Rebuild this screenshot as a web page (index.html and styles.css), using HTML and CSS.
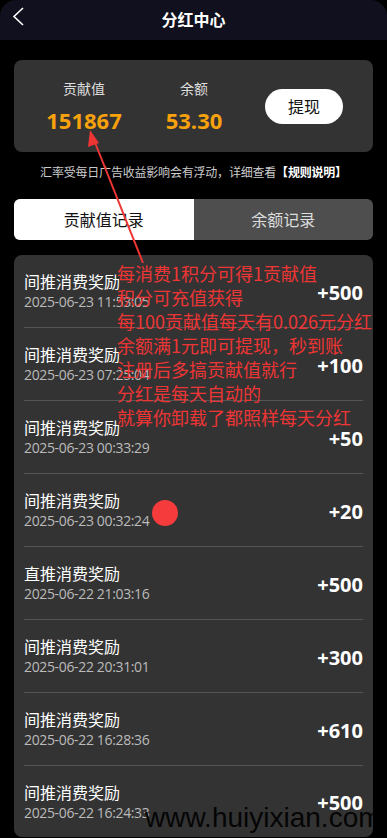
FILE: index.html
```html
<!DOCTYPE html>
<html lang="zh-CN">
<head>
<meta charset="utf-8">
<title>分红中心</title>
<link rel="stylesheet" href="styles.css">
</head>
<body>
<div class="page">
  <header class="header">
    <svg class="back" width="40" height="40" viewBox="0 0 40 40"><polyline points="23,8 14,16.5 23,25" fill="none" stroke="#fff" stroke-width="1.6"/></svg>
    <h1 class="title">分红中心</h1>
    <span class="spacer"></span>
  </header>

  <section class="summary">
    <div class="stat stat-a">
      <div class="stat-label">贡献值</div>
      <div class="stat-value">151867</div>
    </div>
    <div class="stat stat-b">
      <div class="stat-label">余额</div>
      <div class="stat-value">53.30</div>
    </div>
    <button class="withdraw">提现</button>
  </section>

  <p class="note">汇率受每日广告收益影响会有浮动，详细查看<b>【规则说明】</b></p>

  <nav class="tabs">
    <div class="tab active">贡献值记录</div>
    <div class="tab">余额记录</div>
  </nav>

  <section class="list">
    <div class="row"><div class="info"><div class="name">间推消费奖励</div><div class="date">2025-06-23 11:53:05</div></div><div class="amount">+500</div></div>
    <div class="row"><div class="info"><div class="name">间推消费奖励</div><div class="date">2025-06-23 07:25:04</div></div><div class="amount">+100</div></div>
    <div class="row"><div class="info"><div class="name">间推消费奖励</div><div class="date">2025-06-23 00:33:29</div></div><div class="amount">+50</div></div>
    <div class="row"><div class="info"><div class="name">间推消费奖励</div><div class="date">2025-06-23 00:32:24</div></div><div class="amount">+20</div></div>
    <div class="row"><div class="info"><div class="name">直推消费奖励</div><div class="date">2025-06-22 21:03:16</div></div><div class="amount">+500</div></div>
    <div class="row"><div class="info"><div class="name">间推消费奖励</div><div class="date">2025-06-22 20:31:01</div></div><div class="amount">+300</div></div>
    <div class="row"><div class="info"><div class="name">间推消费奖励</div><div class="date">2025-06-22 16:28:36</div></div><div class="amount">+610</div></div>
    <div class="row last"><div class="info"><div class="name">间推消费奖励</div><div class="date">2025-06-22 16:24:33</div></div><div class="amount">+500</div></div>
    <div class="watermark">www.huiyixian.com</div>
  </section>

  <div class="annotation">每消费1积分可得1贡献值<br>积分可充值获得<br>每100贡献值每天有0.026元分红<br>余额满1元即可提现，秒到账<br>注册后多搞贡献值就行<br>分红是每天自动的<br>就算你卸载了都照样每天分红</div>
  <svg class="arrow" width="387" height="300" viewBox="0 0 387 300">
    <line x1="143" y1="263" x2="94" y2="140" stroke="#ee3535" stroke-width="2"/>
    <polygon points="90,130 99,143 88,147" fill="#ee3535"/>
  </svg>
  <span class="dot"></span>
</div>
</body>
</html>
```

FILE: styles.css
```css
* { box-sizing: border-box; margin: 0; padding: 0; }
html, body { background: #000; }
body {
  width: 387px;
  height: 838px;
  overflow: hidden;
  font-family: "Open Sans", "Noto Sans CJK SC", sans-serif;
  color: #fff;
}
.page { position: relative; }

.header {
  height: 40px;
  background: #10101e;
  border-radius: 16px 16px 0 0;
  display: grid;
  grid-template-columns: 40px 1fr 40px;
  align-items: center;
}
.back { display: block; }
.title {
  text-align: center;
  font-size: 16px;
  font-weight: 700;
  font-family: "Noto Sans CJK SC", sans-serif;
  line-height: 40px;
  margin-top: -2px;
}

.summary {
  margin: 20px 14px 0;
  height: 92px;
  background: #333;
  border-radius: 8px;
  display: flex;
  align-items: center;
  padding-left: 10px;
}
.stat { text-align: center; margin-top: -2px; }
.stat-a { width: 120px; }
.stat-b { width: 100px; }
.stat-label {
  font-family: "Noto Sans CJK SC", sans-serif;
  font-size: 14px;
  line-height: 20px;
  color: #ddd;
}
.stat-value {
  margin-top: 10px;
  font-size: 22px;
  font-weight: 700;
  line-height: 24px;
  color: #f7a20c;
}
.withdraw {
  margin-left: 21px;
  width: 78px;
  height: 35px;
  border: 0;
  border-radius: 18px;
  background: #fff;
  color: #111;
  font-family: "Noto Sans CJK SC", sans-serif;
  font-size: 16px;
}

.note {
  margin-top: 12px;
  text-align: center;
  font-family: "Noto Sans CJK SC", sans-serif;
  font-size: 12px;
  line-height: 16px;
  color: #ccc;
  letter-spacing: -0.2px;
}
.note b { color: #fff; font-weight: 700; }

.tabs {
  margin: 19px 14px 0;
  height: 41px;
  display: flex;
  border-radius: 6px;
  overflow: hidden;
  background: #4e4e4e;
}
.tab {
  flex: 1;
  display: flex;
  align-items: center;
  justify-content: center;
  font-family: "Noto Sans CJK SC", sans-serif;
  font-size: 16px;
  color: #ddd;
  padding-bottom: 1px;
}
.tab.active { background: #fff; color: #111; }

.list {
  position: relative;
  margin: 15px 14px 0;
  background: #333;
  border-radius: 8px;
  padding: 0 10px;
  overflow: hidden;
}
.row {
  height: 73px;
  border-bottom: 1px solid #555;
  display: flex;
  align-items: center;
  justify-content: space-between;
}
.row.last { border-bottom: 0; height: 71px; }
.info { padding-top: 1px; }
.name {
  font-family: "Noto Sans CJK SC", sans-serif;
  font-size: 16px;
  line-height: 20px;
  color: #fff;
}
.date {
  margin-top: 1px;
  font-size: 14px;
  line-height: 20px;
  color: #bbb;
  letter-spacing: -0.35px;
}
.amount {
  font-size: 20px;
  font-weight: 700;
  color: #fff;
  padding-top: 2px;
}
.watermark {
  position: absolute;
  left: 131px;
  top: 547px;
  font-family: "Liberation Sans", sans-serif;
  font-size: 28px;
  line-height: 32px;
  color: #050505;
  white-space: nowrap;
}

.annotation {
  position: absolute;
  left: 117px;
  top: 261px;
  font-family: "Noto Sans CJK SC", sans-serif;
  font-size: 18px;
  line-height: 24px;
  color: #ee3535;
  white-space: nowrap;
}
.arrow { position: absolute; left: 0; top: 0; }
.dot {
  position: absolute;
  left: 152px;
  top: 500px;
  width: 26px;
  height: 26px;
  border-radius: 50%;
  background: #f53b3b;
}
```
